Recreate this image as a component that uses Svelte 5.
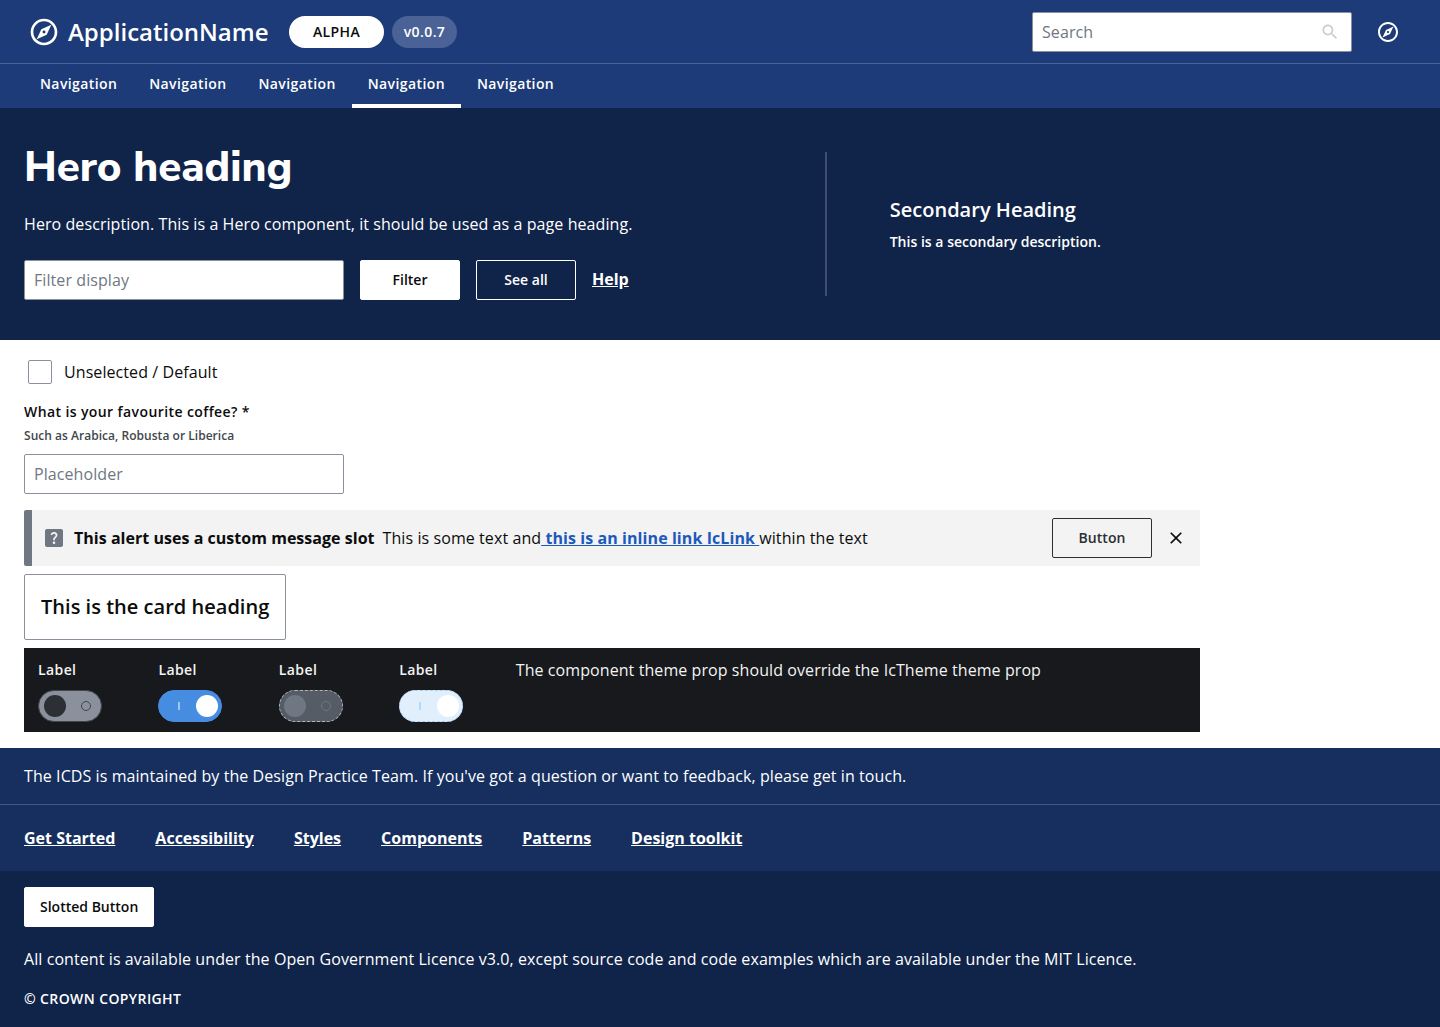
<script>
  const navItems = [1, 2, 3, 4, 5];
  const activeNav = 4;
  const footerLinks = ['Get Started', 'Accessibility', 'Styles', 'Components', 'Patterns', 'Design toolkit'];
  const toggles = ['off', 'on', 'off disabled', 'on disabled'];
</script>

{#snippet compass()}
  <svg class="compass" viewBox="0 0 24 24" fill="currentColor" aria-hidden="true">
    <path d="M12 2C6.48 2 2 6.48 2 12s4.48 10 10 10 10-4.48 10-10S17.52 2 12 2zm0 18c-4.41 0-8-3.59-8-8s3.59-8 8-8 8 3.59 8 8-3.59 8-8 8zm-5.5-2.5 7.51-3.49L17.5 6.5 9.99 9.99 6.5 17.5zm5.5-6.6c.61 0 1.1.49 1.1 1.1s-.49 1.1-1.1 1.1-1.1-.49-1.1-1.1.49-1.1 1.1-1.1z" />
  </svg>
{/snippet}

<header>
  <div class="topbar">
    <div class="brand">
      {@render compass()}
      <span class="app-name">ApplicationName</span>
      <span class="tag alpha">ALPHA</span>
      <span class="tag version">v0.0.7</span>
    </div>
    <div class="tools">
      <label class="field search">
        <input placeholder="Search" aria-label="Search" />
        <svg viewBox="0 0 24 24" fill="currentColor" aria-hidden="true">
          <path d="M15.5 14h-.79l-.28-.27C15.41 12.59 16 11.11 16 9.5 16 5.91 13.09 3 9.5 3S3 5.91 3 9.5 5.91 16 9.5 16c1.61 0 3.09-.59 4.23-1.57l.27.28v.79l5 4.99L20.49 19l-4.99-5zm-6 0C7.01 14 5 11.99 5 9.5S7.01 5 9.5 5 14 7.01 14 9.5 11.99 14 9.5 14z" />
        </svg>
      </label>
      {@render compass()}
    </div>
  </div>
  <nav>
    {#each navItems as item}
      <span class="nav-item" class:active={item === activeNav}>Navigation</span>
    {/each}
  </nav>
</header>

<section class="hero">
  <div class="hero-main">
    <h1>Hero heading</h1>
    <p>Hero description. This is a Hero component, it should be used as a page heading.</p>
    <div class="actions">
      <label class="field"><input placeholder="Filter display" aria-label="Filter display" /></label>
      <button class="solid">Filter</button>
      <button class="outline">See all</button>
      <span class="link help">Help</span>
    </div>
  </div>
  <div class="hero-side">
    <h2>Secondary Heading</h2>
    <p>This is a secondary description.</p>
  </div>
</section>

<main>
  <div class="check-row">
    <span class="checkbox"></span>
    <span>Unselected / Default</span>
  </div>
  <div class="form-label">What is your favourite coffee? *</div>
  <div class="helper">Such as Arabica, Robusta or Liberica</div>
  <label class="field"><input placeholder="Placeholder" aria-label="Favourite coffee" /></label>

  <div class="alert">
    <svg class="question" viewBox="0 0 24 24" aria-hidden="true">
      <path fill="#6f7782" d="M19 3H5c-1.1 0-2 .9-2 2v14c0 1.1.9 2 2 2h14c1.1 0 2-.9 2-2V5c0-1.1-.9-2-2-2zm-6.99 15c-.7 0-1.26-.56-1.26-1.26 0-.71.56-1.25 1.26-1.25.71 0 1.25.54 1.25 1.25-.01.69-.54 1.26-1.25 1.26zm3.01-7.4c-.76 1.11-1.48 1.46-1.87 2.17-.16.29-.22.48-.22 1.41h-1.82c0-.49-.08-1.29.31-1.98.49-.87 1.42-1.39 1.96-2.16.57-.81.25-2.33-1.37-2.33-1.06 0-1.58.8-1.8 1.48l-1.65-.7C9.01 7.15 10.22 6 11.99 6c1.48 0 2.49.67 3.01 1.52.44.72.7 2.07.02 3.08z" />
    </svg>
    <strong>This alert uses a custom message slot</strong>
    <div class="message">This is some text and<span class="inline-link">&nbsp;this is an inline link IcLink&nbsp;</span>within the text</div>
    <button class="alert-button">Button</button>
    <svg class="close" viewBox="0 0 24 24" fill="currentColor" aria-hidden="true">
      <path d="M19 6.41 17.59 5 12 10.59 6.41 5 5 6.41 10.59 12 5 17.59 6.41 19 12 13.41 17.59 19 19 17.59 13.41 12z" />
    </svg>
  </div>

  <div class="card">This is the card heading</div>

  <div class="dark-panel">
    {#each toggles as state}
      <div class="toggle-cell">
        <div class="toggle-label">Label</div>
        <div class="switch {state}">
          <span class="knob"></span>
          <span class="mark"></span>
        </div>
      </div>
    {/each}
    <div class="dark-text">The component theme prop should override the IcTheme theme prop</div>
  </div>
</main>

<footer>
  <p class="footer-intro">The ICDS is maintained by the Design Practice Team. If you've got a question or want to feedback, please get in touch.</p>
  <div class="footer-links">
    {#each footerLinks as label}
      <span class="link">{label}</span>
    {/each}
  </div>
  <div class="footer-base">
    <button class="solid slotted">Slotted Button</button>
    <p>All content is available under the Open Government Licence v3.0, except source code and code examples which are available under the MIT Licence.</p>
    <small>© CROWN COPYRIGHT</small>
  </div>
</footer>

<style>
  :global(body) {
    margin: 0;
    background: #fff;
    color: #0b0c0c;
    font: 400 16px/24px 'Open Sans', sans-serif;
    letter-spacing: 0.08px;
  }
  :global(*) { box-sizing: border-box; }
  h1, h2, p { margin: 0; }
  svg { flex: none; }

  header { background: #1c3b78; color: #fff; }
  .topbar {
    height: 64px;
    display: flex;
    align-items: center;
    justify-content: space-between;
    padding: 0 40px 0 28px;
    border-bottom: 1px solid #4a6295;
  }
  .brand, .tools { display: flex; align-items: center; }
  .brand .compass { width: 32px; height: 32px; margin-right: 8px; }
  .app-name { font-size: 24px; font-weight: 600; letter-spacing: 0; margin-right: 20px; }
  .tag {
    height: 32px;
    border-radius: 16px;
    display: flex;
    align-items: center;
    justify-content: center;
    font-size: 14px;
    font-weight: 600;
    letter-spacing: 0.4px;
    padding-left: 1px;
  }
  .alpha { width: 95px; background: #fff; color: #0b0c0c; margin-right: 8px; }
  .version { width: 65px; background: #4a6295; }
  .tools .compass { width: 24px; height: 24px; margin-left: 24px; }

  .field {
    display: flex;
    align-items: center;
    width: 320px;
    height: 40px;
    padding: 0 9px;
    background: #fff;
    border: 1px solid #8b919c;
    border-radius: 2px;
  }
  .field input {
    flex: 1;
    min-width: 0;
    border: 0;
    padding: 0;
    background: none;
    font: inherit;
    letter-spacing: inherit;
  }
  .field input::placeholder { color: #6f7782; opacity: 1; }
  .search svg { width: 20px; height: 20px; margin-right: 2px; color: #ccc; }

  nav { height: 44px; display: flex; padding-left: 24px; }
  .nav-item {
    padding: 8px 16px 0;
    border-bottom: 4px solid transparent;
    font-size: 14px;
    font-weight: 600;
    letter-spacing: 0.4px;
  }
  .nav-item.active { border-color: #fff; }

  .hero {
    height: 232px;
    display: flex;
    background: #10244a;
    color: #fff;
    padding: 32px 24px 40px;
  }
  .hero-main { width: 801px; flex: none; }
  h1 { font: 800 42px/52px 'Nunito Sans', Nunito, Lato, sans-serif; letter-spacing: 0; padding-top: 2px; margin-bottom: 18px; }
  .actions { display: flex; align-items: center; gap: 16px; margin-top: 24px; }
  .hero-side {
    height: 144px;
    margin-top: 12px;
    border-left: 2px solid #404f6e;
    padding: 44px 0 0 62.7px;
  }
  .hero-side h2 { font-size: 20px; line-height: 28px; font-weight: 600; letter-spacing: 0.02px; }
  .hero-side p { font-size: 14px; font-weight: 600; letter-spacing: 0.02px; margin-top: 6px; }

  button {
    height: 40px;
    min-width: 100px;
    padding: 0 15px;
    border: 1px solid #fff;
    border-radius: 2px;
    background: transparent;
    font: 600 14px/24px 'Open Sans', sans-serif;
    letter-spacing: 0;
    color: #0b0c0c;
  }
  .solid { background: #fff; }
  .outline { color: #fff; }
  .link { color: #fff; font-weight: 700; letter-spacing: 0; text-decoration: underline; }
  .help { position: relative; top: -1px; }

  main { padding: 16px 24px; height: 408px; }
  .check-row { height: 32px; display: flex; align-items: center; gap: 12px; padding-left: 4px; }
  .checkbox { width: 24px; height: 24px; border: 1px solid #8b919c; border-radius: 2px; }
  .form-label { margin-top: 12px; font-size: 14px; font-weight: 600; letter-spacing: 0.4px; }
  .helper { font-size: 12px; font-weight: 600; color: #41464d; margin-bottom: 6px; letter-spacing: 0.03px; }

  .alert {
    width: 1176px;
    height: 56px;
    margin-top: 16px;
    display: flex;
    align-items: center;
    background: #f3f3f3;
    border-left: 8px solid #6f7782;
    border-radius: 2px;
    padding: 0 12px 0 10.4px;
  }
  .question { width: 24px; height: 24px; margin-right: 7.6px; }
  .alert strong { font-weight: 700; margin-right: 8px; letter-spacing: 0.03px; }
  .message { flex: 1; }
  .inline-link { color: #1b5abb; font-weight: 700; text-decoration: underline; }
  .alert-button { border-color: #2c2f34; color: #2c2f34; letter-spacing: 0.1px; }
  .close { width: 20px; height: 20px; margin: 0 2px 0 14px; }

  .card {
    width: 262px;
    height: 66px;
    margin: 8px 0;
    padding: 20px 16px;
    border: 1px solid #8b919c;
    border-radius: 2px;
    font-size: 20px;
    font-weight: 600;
    letter-spacing: 0.02px;
    white-space: nowrap;
  }

  .dark-panel {
    width: 1176px;
    height: 84px;
    background: #17191c;
    color: #f3f3f3;
    display: flex;
    padding: 10px 14px;
  }
  .toggle-cell { width: 120.4px; }
  .toggle-label { font-size: 14px; font-weight: 600; letter-spacing: 0.4px; }
  .dark-text { margin-left: -3.8px; }
  .switch {
    width: 64px;
    height: 32px;
    margin-top: 8px;
    padding: 0 4px 0 5px;
    border: 1px solid #41464d;
    border-radius: 16px;
    background: #8b919c;
    display: flex;
    align-items: center;
    justify-content: space-between;
  }
  .knob { width: 22px; height: 22px; border-radius: 50%; background: #2c2f34; }
  .mark { width: 10px; height: 10px; margin-right: 6px; border: 1px solid #41464d; border-radius: 50%; }
  .on { flex-direction: row-reverse; padding: 0 3.5px 0 4.5px; background: #468de2; border-color: #468de2; }
  .on .knob { background: #fff; }
  .on .mark { width: 2px; height: 8px; margin: 0 0 0 14px; border: 0; border-radius: 0; background: #a3c7f1; }
  .off.disabled { padding: 0 5px 0 4.5px; background: #565c65; border: 1px dashed #b0b5bd; }
  .off.disabled .knob { background: #6f7782; }
  .off.disabled .mark { border-color: #6f7782; }
  .on.disabled { padding: 0 3px 0 5px; background: #e1effd; border: 1px dashed #a9cdf3; }
  .on.disabled .mark { background: #b3d8fb; }

  footer { color: #fff; background: #162f5f; }
  .footer-intro { height: 57px; padding: 16px 24px; border-bottom: 1px solid #455982; }
  .footer-links { height: 66px; display: flex; align-items: center; gap: 40px; padding: 0 24px; }
  .footer-base { height: 156px; padding: 16px 24px; background: #10244a; }
  .footer-base p { margin-top: 20px; }
  .footer-base small { display: block; margin-top: 16px; font-size: 14px; font-weight: 600; letter-spacing: 0.4px; }
  .slotted { display: block; }
</style>
